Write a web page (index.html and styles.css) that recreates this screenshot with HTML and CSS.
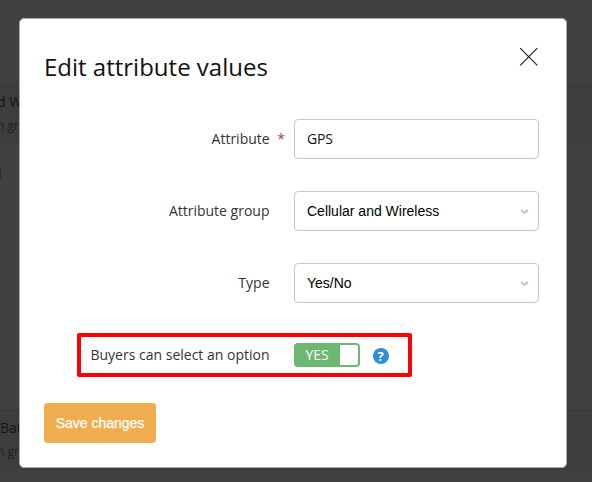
FILE: index.html
```html
<!DOCTYPE html>
<html lang="en">
<head>
<meta charset="utf-8">
<title>Edit attribute values</title>
<link rel="stylesheet" href="styles.css">
</head>
<body>
<div class="backdrop">
  <div class="row row-top"></div>
  <div class="row row-head"></div>
  <div class="row row-group"><span class="group-name">d W</span><span class="group-note">n gr</span></div>
  <div class="row row-item"><span class="item-link">l</span></div>
  <div class="row row-item"></div>
  <div class="row row-item"></div>
  <div class="row row-item"></div>
  <div class="row row-gap"></div>
  <div class="row row-group"><span class="group-name">Bat</span><span class="group-note">n gr</span></div>
</div>
<main class="modal">
  <header class="modal-head">
    <h1 class="title">Edit attribute values</h1>
    <button class="close" aria-label="Close"><svg width="20" height="20" viewBox="0 0 20 20"><path d="M1.2 1.2 18.3 18.3M18.3 1.2 1.2 18.3" fill="none" stroke="#222" stroke-width="1.2"/></svg></button>
  </header>
  <form class="form">
    <div class="field">
      <label class="label required">Attribute <span class="star">*</span></label>
      <div class="control text-control">GPS</div>
    </div>
    <div class="field">
      <label class="label">Attribute group</label>
      <div class="control select">Cellular and Wireless<svg class="chevron" width="9" height="6" viewBox="0 0 9 6"><path d="M1 1 4.5 4 8 1" fill="none" stroke="#a6a6b6" stroke-width="1.1"/></svg></div>
    </div>
    <div class="field">
      <label class="label">Type</label>
      <div class="control select">Yes/No<svg class="chevron" width="9" height="6" viewBox="0 0 9 6"><path d="M1 1 4.5 4 8 1" fill="none" stroke="#a6a6b6" stroke-width="1.1"/></svg></div>
    </div>
    <div class="option">
      <label class="label">Buyers can select an option</label>
      <div class="switch"><span class="switch-text">YES</span><span class="knob"></span></div>
      <span class="help">?</span>
    </div>
    <button class="save" type="button">Save changes</button>
  </form>
</main>
</body>
</html>
```
FILE: styles.css
```css
* { box-sizing: border-box; }
body {
  margin: 0;
  width: 592px;
  height: 482px;
  display: grid;
  overflow: hidden;
  background: #414141;
  font: 14px/20px "Open Sans", "Noto Sans", sans-serif;
  color: #333;
}
.backdrop, .modal { grid-area: 1 / 1; }
.backdrop { height: 482px; overflow: hidden; }
.row { border-bottom: 1px solid #3e3e3e; white-space: nowrap; }
.row-top { height: 59px; }
.row-head, .row-gap { height: 24px; border-bottom: 0; }
.row-group {
  height: 62px;
  padding-top: 9px;
  background: #3d3d3d;
  display: flex;
  flex-direction: column;
}
.row-item { height: 60px; padding-top: 19px; }
.row-gap + .row-group .group-name { margin-left: 0; }
.group-name { color: #151515; line-height: 20px; margin-left: -3px; }
.group-note { color: #222; font-size: 12px; line-height: 27px; margin-left: -3px; }
.item-link { color: #151515; margin-left: -2px; }
.modal {
  width: 548px;
  height: 450px;
  margin: 18px 0 0 19px;
  padding: 24px 27px 0 24px;
  background: #fff;
  border: 1px solid #aaa;
  border-radius: 5px;
}
.modal-head { display: flex; justify-content: space-between; height: 76px; }
.title {
  margin: 8px 0 0;
  font-size: 24px;
  line-height: 32px;
  font-weight: 400;
  color: #111;
}
.close {
  width: 20px;
  height: 20px;
  margin-top: 4px;
  padding: 0;
  border: 0;
  background: none;
}
.close svg { display: block; }
.form { display: flex; flex-direction: column; align-items: flex-start; }
.field { display: flex; align-items: center; height: 40px; margin-bottom: 32px; }
.label { width: 226px; text-align: right; padding-right: 0.5px; margin-right: 24px; }
.required { width: 241px; margin-right: 9px; padding-right: 0; }
.star { color: #b33762; margin-left: 4px; }
.control {
  width: 245px;
  height: 40px;
  padding: 0 9px 0 12px;
  display: flex;
  align-items: center;
  justify-content: space-between;
  border: 1px solid #c8c8c8;
  border-radius: 4px;
  color: #111;
}
.text-control { letter-spacing: -0.2px; }
.select { font-family: "Liberation Sans", Arial, sans-serif; color: #000; }
.chevron { margin-top: 2px; }
.option {
  width: 335px;
  height: 44px;
  margin: -2px 0 26px 33px;
  padding-left: 9px;
  display: flex;
  align-items: center;
  border: 4px solid #f00;
  border-radius: 2px;
}
.option .label { width: 180px; white-space: nowrap; }
.switch {
  display: flex;
  width: 66px;
  height: 24px;
  padding: 2px;
  background: #6cb871;
  border-radius: 4px;
}
.switch-text { width: 44px; padding-right: 2px; text-align: center; color: #fff; line-height: 20px; letter-spacing: -0.1px; }
.knob { width: 18px; background: #fff; border-radius: 0 2px 2px 0; }
.help {
  width: 16px;
  height: 16px;
  margin: 2px 0 0 12.5px;
  border-radius: 50%;
  background: #2e8fd3;
  color: #fff;
  font-size: 13px;
  line-height: 16px;
  font-weight: 700;
  text-align: center;
}
.save {
  width: 112px;
  height: 40px;
  padding: 0;
  border: 0;
  border-radius: 4px;
  background: #f0ad4e;
  color: #fff;
  font: 14px/20px "Liberation Sans", Arial, sans-serif;
  -webkit-text-stroke: 0.25px #fff;
}
```
